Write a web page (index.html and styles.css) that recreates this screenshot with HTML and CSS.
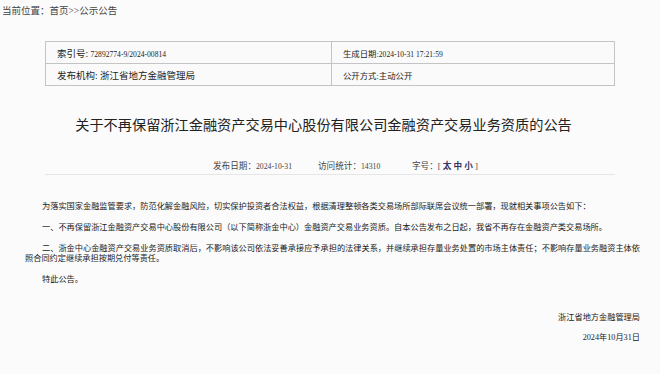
FILE: index.html
```html
<!DOCTYPE html>
<html lang="zh-CN">
<head>
    <meta charset="UTF-8">
    <title>关于不再保留浙江金融资产交易中心股份有限公司金融资产交易业务资质的公告</title>
    <link rel="stylesheet" href="styles.css">
</head>
<body>
    <div class="crumb">当前位置：首页&gt;&gt;公示公告</div>

    <table class="info-table">
        <tr>
            <td class="cell-left">索引号: <span class="num">72892774-9/2024-00814</span></td>
            <td class="cell-right">生成日期:<span class="num">2024-10-31 17:21:59</span></td>
        </tr>
        <tr>
            <td class="cell-left">发布机构: 浙江省地方金融管理局</td>
            <td class="cell-right">公开方式:主动公开</td>
        </tr>
    </table>

    <h1 class="title">关于不再保留浙江金融资产交易中心股份有限公司金融资产交易业务资质的公告</h1>

    <div class="meta">
        <span class="meta-date">发布日期：<span class="num">2024-10-31</span></span>
        <span class="meta-visit">访问统计：<span class="num">14310</span></span>
        <span class="meta-size">字号：[ <a href="#">太</a> <a href="#">中</a> <a href="#">小</a> ]</span>
    </div>

    <div class="content">
        <p>为落实国家金融监管要求，防范化解金融风险，切实保护投资者合法权益，根据清理整顿各类交易场所部际联席会议统一部署，现就相关事项公告如下：</p>
        <p>一、不再保留浙江金融资产交易中心股份有限公司（以下简称浙金中心）金融资产交易业务资质。自本公告发布之日起，我省不再存在金融资产类交易场所。</p>
        <p>二、浙金中心金融资产交易业务资质取消后，不影响该公司依法妥善承接应予承担的法律关系，并继续承担存量业务处置的市场主体责任；不影响存量业务融资主体依照合同约定继续承担按期兑付等责任。</p>
        <p>特此公告。</p>
    </div>

    <div class="sign">
        <p>浙江省地方金融管理局</p>
        <p>2024年10月31日</p>
    </div>
</body>
</html>
```

FILE: styles.css
```css
body {
    margin: 0;
    background-color: #fbfbfb;
    color: #222;
    font-family: "Liberation Serif", "Noto Sans CJK SC", serif;
}
.num {
    font-size: 0.9em;
}
.crumb {
    height: 22px;
    line-height: 22px;
    padding-left: 2px;
    font-size: 9.5px;
    color: #444;
}
.info-table {
    margin: 19px 0 0 45px;
    width: 570px;
    border-collapse: collapse;
    background: #fafafa;
}
.info-table td {
    height: 21px;
    padding: 0 0 0 11px;
    border: 1px solid #c4c4c4;
    color: #222;
}
.cell-left {
    width: 274px;
    font-size: 9.5px;
}
.cell-left .num {
    font-size: 0.8em;
}
.cell-right {
    font-size: 8.4px;
}
.title {
    margin: 29px 0 0;
    padding-right: 13px;
    line-height: 20px;
    text-align: center;
    font-family: "Liberation Sans", "Noto Sans CJK SC", sans-serif;
    font-size: 14.2px;
    font-weight: normal;
    color: #222;
}
.meta {
    margin: 24px 45px 0;
    display: flex;
    line-height: 14px;
    font-size: 8.6px;
    color: #444;
    border-bottom: 1px solid #e6e6e6;
}
.meta-date {
    margin-left: 168px;
    width: 105px;
}
.meta-visit {
    width: 94px;
}
.meta a {
    color: #336;
    font-weight: bold;
    text-decoration: none;
}
.content {
    margin-top: 27px;
    padding: 0 20px 0 25px;
    font-size: 8.2px;
    color: #222;
}
.content p {
    margin: 0 0 11px;
    line-height: 10px;
    text-indent: 17px;
    text-align: justify;
}
.sign {
    margin-top: 28px;
    padding-right: 20px;
    text-align: right;
    font-size: 8.2px;
}
.sign p {
    margin: 0 0 10px;
    line-height: 10px;
}
```
